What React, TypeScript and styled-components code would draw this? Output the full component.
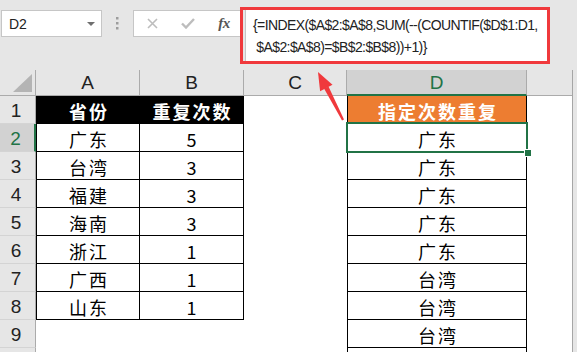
import React from 'react';
import styled, { createGlobalStyle } from 'styled-components';

const GlobalStyle = createGlobalStyle`
  body {
    margin: 0;
    background: #e6e6e6;
    overflow: hidden;
  }
`;

const Window = styled.div`
  position: relative;
  width: 577px;
  height: 352px;
  overflow: hidden;
  background: #e6e6e6;
  font-family: "Liberation Sans", Arial, sans-serif;
`;

const TopBar = styled.div`
  height: 70px;
  box-sizing: border-box;
  display: flex;
  align-items: flex-start;
  padding: 10px 0 0 1px;
`;

const NameBox = styled.div`
  width: 101px;
  height: 27px;
  box-sizing: border-box;
  background: #fff;
  border: 1px solid #c6c6c6;
  display: flex;
  align-items: center;
  justify-content: space-between;
  padding: 0 6px 0 7px;
  font-size: 14px;
  color: #222;
`;

const DropArrow = styled.span`
  width: 0;
  height: 0;
  border-left: 4px solid transparent;
  border-right: 4px solid transparent;
  border-top: 4px solid #6f6f6f;
`;

const Grip = styled.div`
  width: 31px;
  height: 27px;
  display: flex;
  align-items: center;
  justify-content: center;
`;

const IconStrip = styled.div`
  width: 107px;
  height: 27px;
  box-sizing: border-box;
  background: #fff;
  border: 1px solid #c6c6c6;
  border-right: none;
  display: flex;
  align-items: center;
  overflow: hidden;
`;

const IconSlot = styled.div`
  flex: 0 0 36px;
  height: 25px;
  display: flex;
  align-items: center;
  justify-content: center;
`;

const Fx = styled.span`
  font-family: "Liberation Serif", "Times New Roman", serif;
  font-style: italic;
  font-weight: 700;
  font-size: 15px;
  color: #555;
  letter-spacing: -0.5px;
`;

const Highlight = styled.div`
  width: 310px;
  height: 57px;
  margin-top: -3px;
  box-sizing: border-box;
  border: 3px solid #f0393c;
  background: #e6e6e6;
  display: flex;
`;

const FormulaInput = styled.div`
  flex: 1;
  margin-left: 2px;
  background: #fff;
  border-left: 1px solid #c6c6c6;
  padding: 4px 0 0 7px;
  font-size: 14px;
  line-height: 22px;
  letter-spacing: -0.6px;
  color: #222;
  white-space: pre;
`;

const Sheet = styled.div`
  display: grid;
  grid-template-columns: 36px 104px 104px 103px 180px 45px;
  grid-template-rows: 26px repeat(10, 28px);
  width: 573px;
  box-sizing: border-box;
  background: #fff;
  border-right: 1px solid #a6a6a6;
`;

const Corner = styled.div`
  background: #e6e6e6;
  border-right: 1px solid #ababab;
  border-bottom: 1px solid #ababab;
  position: relative;
  &::after {
    content: '';
    position: absolute;
    right: 3px;
    bottom: 3px;
    width: 0;
    height: 0;
    border-left: 19px solid transparent;
    border-bottom: 18px solid #b4b4b4;
  }
`;

const ColHeader = styled.div<{ $active?: boolean; $blank?: boolean }>`
  box-sizing: border-box;
  background: ${p => (p.$active ? '#d2d2d2' : '#e6e6e6')};
  border-right: ${p => (p.$blank ? 'none' : '1px solid #ababab')};
  border-bottom: ${p => (p.$active ? '2px solid #217346' : '1px solid #ababab')};
  color: ${p => (p.$active ? '#217346' : '#222')};
  font-size: 19px;
  display: flex;
  align-items: center;
  justify-content: center;
  padding-top: 1px;
`;

const RowHeader = styled.div<{ $active?: boolean }>`
  box-sizing: border-box;
  background: ${p => (p.$active ? '#d2d2d2' : '#e6e6e6')};
  border-right: ${p => (p.$active ? '2px solid #217346' : '1px solid #ababab')};
  border-bottom: 1px solid #d4d4d4;
  color: ${p => (p.$active ? '#217346' : '#222')};
  font-size: 19px;
  display: flex;
  align-items: center;
  justify-content: center;
  padding: 2px 3px 0 0;
`;

type Fill = 'none' | 'black' | 'orange';

const Cell = styled.div<{ $fill?: Fill; $boxed?: boolean; $left?: boolean; $selected?: boolean }>`
  position: relative;
  z-index: ${p => (p.$selected ? 2 : 0)};
  box-sizing: border-box;
  background: ${p => (p.$fill === 'black' ? '#000' : p.$fill === 'orange' ? '#ed7d31' : '#fff')};
  color: ${p => (p.$fill && p.$fill !== 'none' ? '#fff' : '#000')};
  font-weight: ${p => (p.$fill && p.$fill !== 'none' ? 700 : 400)};
  border-right: ${p => (p.$boxed ? '1px solid #000' : 'none')};
  border-bottom: ${p => (p.$boxed ? '1px solid #000' : 'none')};
  border-left: ${p => (p.$left ? '1px solid #000' : 'none')};
  font-family: "Noto Sans CJK SC", "Liberation Sans", sans-serif;
  font-size: 18px;
  letter-spacing: 2px;
  text-indent: 2px;
  display: flex;
  align-items: center;
  justify-content: center;
  padding-top: 2px;
  ${p =>
    p.$selected &&
    `
    &::after {
      content: '';
      position: absolute;
      left: -2px;
      top: -2px;
      right: -2px;
      bottom: -2px;
      border: 2px solid #217346;
      pointer-events: none;
    }
  `}
`;

const FillHandle = styled.span`
  position: absolute;
  right: -5px;
  bottom: -5px;
  width: 6px;
  height: 6px;
  background: #217346;
  outline: 1px solid #fff;
  z-index: 3;
`;

const Overlay = styled.svg`
  position: absolute;
  left: 0;
  top: 0;
  z-index: 5;
  pointer-events: none;
`;

const provinces: [string, number][] = [
  ['广东', 5],
  ['台湾', 3],
  ['福建', 3],
  ['海南', 3],
  ['浙江', 1],
  ['广西', 1],
  ['山东', 1],
];

const repeated = ['广东', '广东', '广东', '广东', '广东', '台湾', '台湾', '台湾', ''];

const columns = ['A', 'B', 'C', 'D'];

export default function App() {
  const rows: React.ReactNode[] = [];

  for (let r = 1; r <= 10; r++) {
    const data = r >= 2 && r <= 8 ? provinces[r - 2] : null;
    rows.push(
      <React.Fragment key={r}>
        {/* row 10 only shows its top edge in the window */}
        <RowHeader $active={r === 2}>{r < 10 ? r : ''}</RowHeader>
        {r === 1 ? (
          <>
            <Cell $fill="black" $boxed $left>省份</Cell>
            <Cell $fill="black" $boxed>重复次数</Cell>
          </>
        ) : data ? (
          <>
            <Cell $boxed $left>{data[0]}</Cell>
            <Cell $boxed>{data[1]}</Cell>
          </>
        ) : (
          <>
            <Cell />
            <Cell />
          </>
        )}
        <Cell />
        {r === 1 ? (
          <Cell $fill="orange" $boxed $left>指定次数重复</Cell>
        ) : (
          <Cell $boxed $left $selected={r === 2}>
            {repeated[r - 2]}
            {r === 2 && <FillHandle />}
          </Cell>
        )}
        <Cell />
      </React.Fragment>
    );
  }

  return (
    <Window>
      <GlobalStyle />
      <TopBar>
        <NameBox>
          D2
          <DropArrow />
        </NameBox>
        <Grip>
          <svg width="3" height="13" viewBox="0 0 3 13">
            <rect x="0" y="0" width="2.5" height="2.5" fill="#9d9d9d" />
            <rect x="0" y="5" width="2.5" height="2.5" fill="#9d9d9d" />
            <rect x="0" y="10" width="2.5" height="2.5" fill="#9d9d9d" />
          </svg>
        </Grip>
        <IconStrip>
          <IconSlot>
            <svg width="11" height="11" viewBox="0 0 11 11">
              <path d="M1 1 L10 10 M10 1 L1 10" stroke="#bdbdbd" strokeWidth="1.6" fill="none" />
            </svg>
          </IconSlot>
          <IconSlot>
            <svg width="14" height="11" viewBox="0 0 14 11">
              <path d="M1 5.5 L5 9.5 L13 1" stroke="#bdbdbd" strokeWidth="2.4" fill="none" />
            </svg>
          </IconSlot>
          <IconSlot>
            <Fx>fx</Fx>
          </IconSlot>
        </IconStrip>
        <Highlight>
          <FormulaInput>
            {'{=INDEX($A$2:$A$8,SUM(--(COUNTIF($D$1:D1,'}
            {'\n $A$2:$A$8)=$B$2:$B$8))+1)}'}
          </FormulaInput>
        </Highlight>
      </TopBar>
      <Sheet>
        <Corner />
        {columns.map(c => (
          <ColHeader key={c} $active={c === 'D'}>{c}</ColHeader>
        ))}
        <ColHeader $blank />
        {rows}
      </Sheet>
      <Overlay width="577" height="352" viewBox="0 0 577 352">
        <polygon points="318,72 332.5,84.8 320.1,91.2" fill="#f0393c" />
        <polygon points="324,88.5 328.5,86.5 344,119.5 342,120.5" fill="#f0393c" />
      </Overlay>
    </Window>
  );
}
